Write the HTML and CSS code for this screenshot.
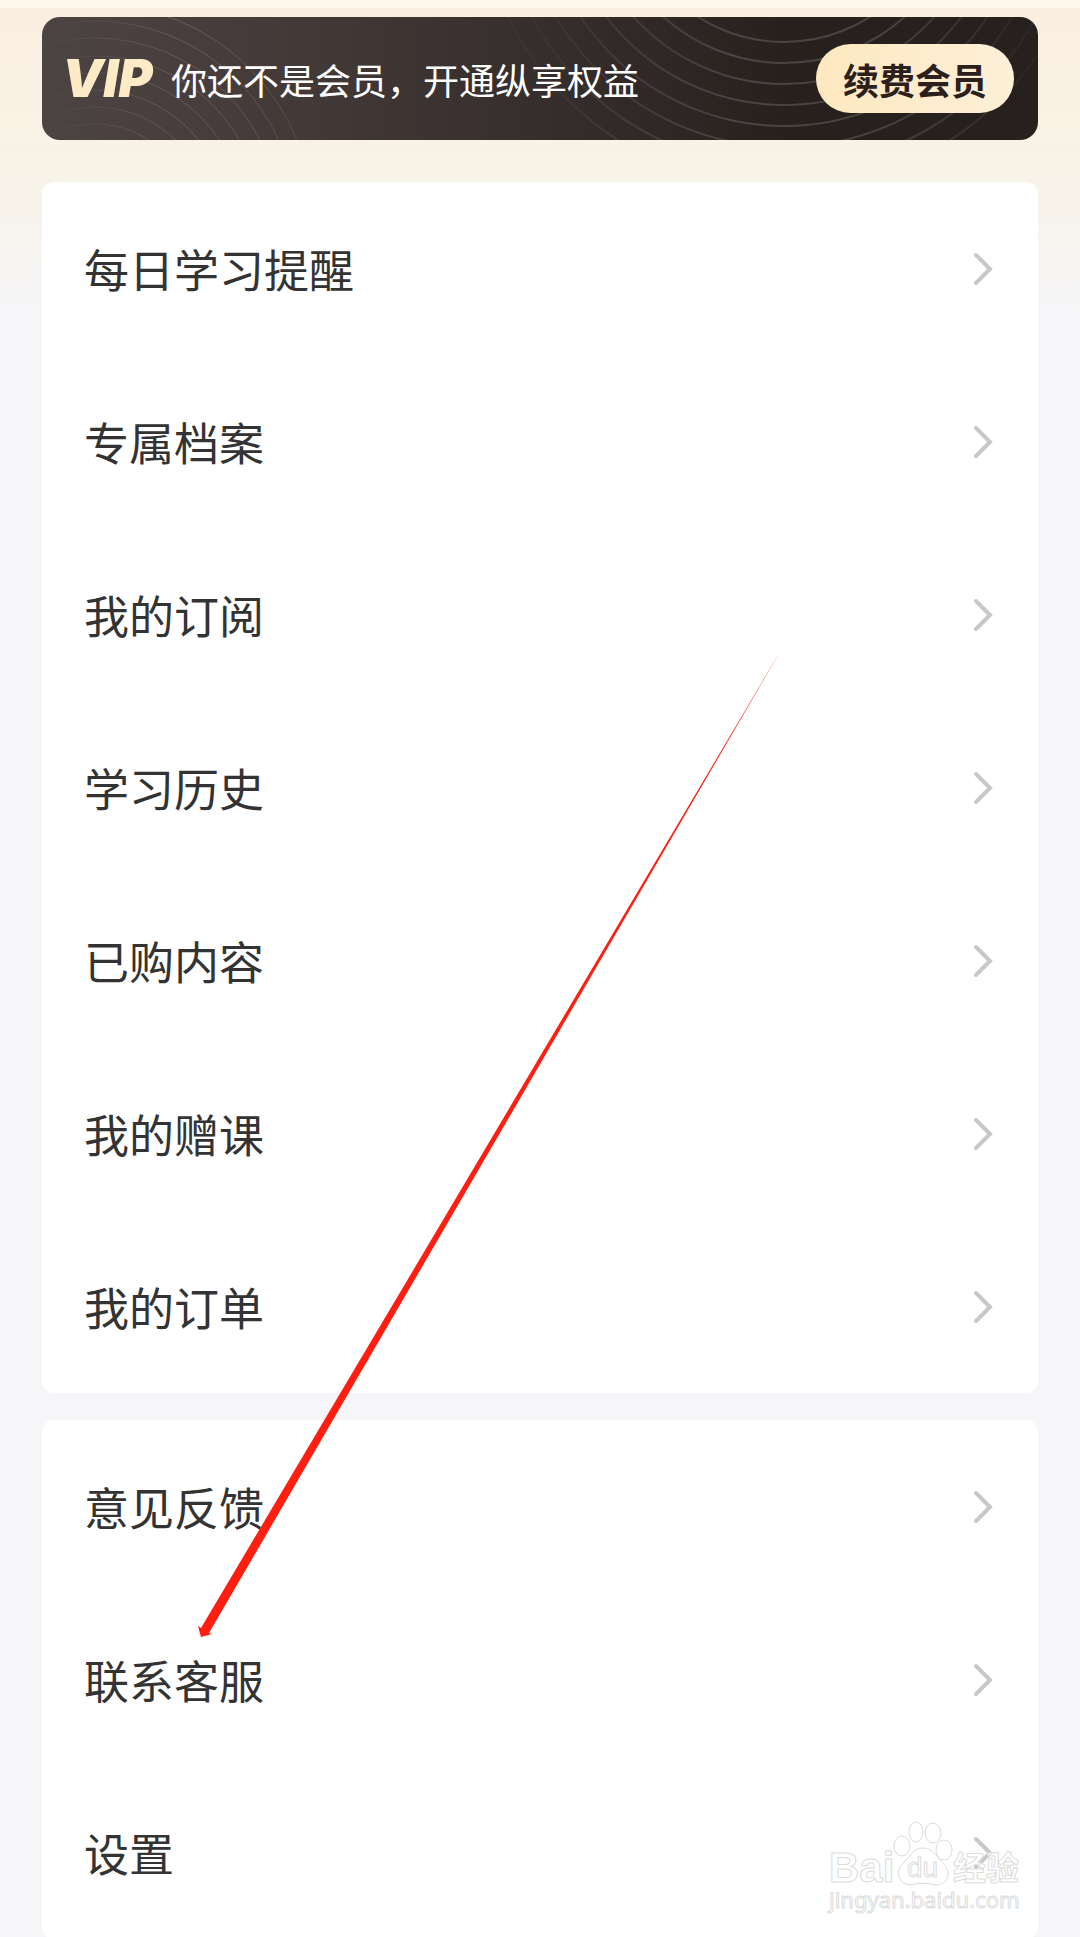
FILE: index.html
```html
<!DOCTYPE html>
<html lang="zh-CN">
<head>
  <meta charset="UTF-8">
  <meta name="viewport" content="width=device-width, initial-scale=1.0">
  <title>我的</title>
  <link rel="stylesheet" href="styles.css">
</head>
<body>

  <main class="page">
    <!-- VIP banner -->
    <section class="vip">
      <svg class="vip-rings" viewBox="0 0 996 123" preserveAspectRatio="xMaxYMid slice" aria-hidden="true">
        <defs>
          <linearGradient id="leftFade" gradientUnits="userSpaceOnUse" x1="20" y1="0" x2="270" y2="0">
            <stop offset="0" stop-color="#7a7070" stop-opacity="0.1"/>
            <stop offset="0.5" stop-color="#7a7070" stop-opacity="0.6"/>
            <stop offset="1" stop-color="#7a7070" stop-opacity="0.3"/>
          </linearGradient>
          <linearGradient id="rightFade" gradientUnits="userSpaceOnUse" x1="500" y1="0" x2="980" y2="0">
            <stop offset="0" stop-color="#6a6664" stop-opacity="0.1"/>
            <stop offset="0.4" stop-color="#6a6664" stop-opacity="0.5"/>
            <stop offset="0.7" stop-color="#6a6664" stop-opacity="0.5"/>
            <stop offset="1" stop-color="#6a6664" stop-opacity="0.1"/>
          </linearGradient>
        </defs>
        <g fill="none" stroke="url(#leftFade)">
          <circle cx="53" cy="205" r="98"/>
          <circle cx="53" cy="205" r="115"/>
          <circle cx="53" cy="205" r="132"/>
          <circle cx="53" cy="205" r="149"/>
          <circle cx="53" cy="205" r="166"/>
          <circle cx="53" cy="205" r="184"/>
          <circle cx="53" cy="205" r="201"/>
          <circle cx="53" cy="205" r="218"/>
        </g>
        <g fill="none" stroke="url(#rightFade)" stroke-width="2">
          <circle cx="742" cy="-135" r="160"/>
          <circle cx="742" cy="-135" r="181"/>
          <circle cx="742" cy="-135" r="202"/>
          <circle cx="742" cy="-135" r="223"/>
          <circle cx="742" cy="-135" r="244"/>
          <circle cx="742" cy="-135" r="265"/>
          <circle cx="742" cy="-135" r="286"/>
          <circle cx="742" cy="-135" r="307"/>
        </g>
      </svg>
      <span class="vip-logo">VIP</span>
      <p class="vip-text">你还不是会员，开通纵享权益</p>
      <button type="button" class="vip-btn">续费会员</button>
    </section>

    <!-- Study menu -->
    <nav class="card">
      <a class="row" href="#remind">每日学习提醒<svg class="chevron" viewBox="0 0 20 34"><path d="M3 3 17 17 3 31"/></svg></a>
      <a class="row" href="#archive">专属档案<svg class="chevron" viewBox="0 0 20 34"><path d="M3 3 17 17 3 31"/></svg></a>
      <a class="row" href="#subscribe">我的订阅<svg class="chevron" viewBox="0 0 20 34"><path d="M3 3 17 17 3 31"/></svg></a>
      <a class="row" href="#history">学习历史<svg class="chevron" viewBox="0 0 20 34"><path d="M3 3 17 17 3 31"/></svg></a>
      <a class="row" href="#bought">已购内容<svg class="chevron" viewBox="0 0 20 34"><path d="M3 3 17 17 3 31"/></svg></a>
      <a class="row" href="#gift">我的赠课<svg class="chevron" viewBox="0 0 20 34"><path d="M3 3 17 17 3 31"/></svg></a>
      <a class="row" href="#orders">我的订单<svg class="chevron" viewBox="0 0 20 34"><path d="M3 3 17 17 3 31"/></svg></a>
    </nav>

    <!-- Support menu -->
    <nav class="card">
      <a class="row" href="#feedback">意见反馈<svg class="chevron" viewBox="0 0 20 34"><path d="M3 3 17 17 3 31"/></svg></a>
      <a class="row" href="#service">联系客服<svg class="chevron" viewBox="0 0 20 34"><path d="M3 3 17 17 3 31"/></svg></a>
      <a class="row" href="#settings">设置<svg class="chevron" viewBox="0 0 20 34"><path d="M3 3 17 17 3 31"/></svg></a>
    </nav>

    <!-- Red pointer to 联系客服 -->
    <svg class="pointer" viewBox="0 0 590 990" aria-hidden="true">
      <polygon fill="#ff1e10" points="590,0 18,983 21,984 10,987 7,976 10,978"/>
    </svg>

    <!-- Watermark -->
    <svg class="watermark" viewBox="0 0 204 100" role="img" aria-label="Baidu 经验">
      <g class="mark">
        <text class="mark-bai" x="3" y="61">Bai</text>
        <path d="M97 27c-10 0-13 9-18 13-5 5-8 9-6 15 2 8 9 10 16 8 5-1 11-1 16 0 8 2 15 0 17-8 1-6-2-10-7-15-5-5-8-13-18-13z"/>
        <ellipse cx="76" cy="25" rx="8" ry="10"/>
        <ellipse cx="90" cy="11" rx="7" ry="10"/>
        <ellipse cx="107" cy="12" rx="8" ry="10"/>
        <ellipse cx="118" cy="29" rx="8" ry="10"/>
        <text class="mark-du" x="81" y="56">du</text>
        <text class="mark-cn" x="127" y="59">经验</text>
        <text class="mark-url" x="3" y="87">jingyan.baidu.com</text>
      </g>
    </svg>
  </main>

</body>
</html>
```
FILE: styles.css
```css
* {
  box-sizing: border-box;
}

body {
  margin: 0;
  font-family: "Noto Sans CJK SC", sans-serif;
  color: #333;
  background-color: #f6f6f9;
}

.page {
  position: relative;
  min-height: 100vh;
  padding: 17px 42px 0;
  background: linear-gradient(#fef8ec 0, #fef8ec 7px, #fbeee0 8px, #f9f2e5 120px, #f8f3e8 180px, #f6f6f9 320px);
}

/* VIP banner */
.vip {
  position: relative;
  display: flex;
  align-items: center;
  height: 123px;
  margin-bottom: 42px;
  padding: 0 24px 0 20px;
  border-radius: 18px;
  overflow: hidden;
  background: linear-gradient(90deg, #4c4343 0%, #423937 28%, #352d2b 52%, #27211e 75%, #26201e 100%);
}

.vip-rings {
  position: absolute;
  top: 0;
  left: 0;
  width: 100%;
  height: 100%;
}

.vip-logo,
.vip-text,
.vip-btn {
  position: relative;
}

.vip-logo {
  width: 94px;
  margin-right: 15px;
  font: italic 900 52px/63px Inter, sans-serif;
  color: #fdebc8;
}

.vip-text {
  flex: 1;
  margin: 0;
  font-size: 36px;
  line-height: 54px;
  color: #fff;
}

.vip-btn {
  height: 69px;
  padding: 0 27px;
  border: none;
  border-radius: 35px;
  font-family: inherit;
  font-size: 36px;
  font-weight: bold;
  line-height: 66px;
  color: #2b201c;
  background: linear-gradient(90deg, #fde8c0, #fdf0d8);
  cursor: pointer;
}

/* Menu cards */
.card {
  margin-bottom: 27px;
  border-radius: 12px;
  background-color: #fff;
}

.card:nth-of-type(2) {
  margin-bottom: 0;
}

.row {
  display: flex;
  align-items: center;
  justify-content: space-between;
  height: 173px;
  padding: 0 45px 0 42px;
  font-size: 45px;
  line-height: 66px;
  color: #333;
  text-decoration: none;
}

.chevron {
  width: 20px;
  height: 34px;
  fill: none;
  stroke: #c8c8c8;
  stroke-width: 4;
  stroke-linecap: round;
}

/* Overlays */
.pointer {
  position: absolute;
  top: 650px;
  left: 191px;
  width: 590px;
  height: 990px;
  pointer-events: none;
}

.watermark {
  position: absolute;
  right: 50px;
  bottom: 18px;
  width: 204px;
  height: 100px;
  pointer-events: none;
}

.mark {
  fill: #fff;
  fill-opacity: 0.7;
  stroke: #dcdcdc;
  stroke-width: 1;
}

.mark-bai {
  font: bold 42px "Liberation Sans", sans-serif;
}

.mark-du {
  font: 28px "Liberation Sans", sans-serif;
}

.mark-cn {
  font: bold 33px "Noto Sans CJK SC", sans-serif;
}

.mark-url {
  font: 22px "Noto Sans", sans-serif;
}
```
